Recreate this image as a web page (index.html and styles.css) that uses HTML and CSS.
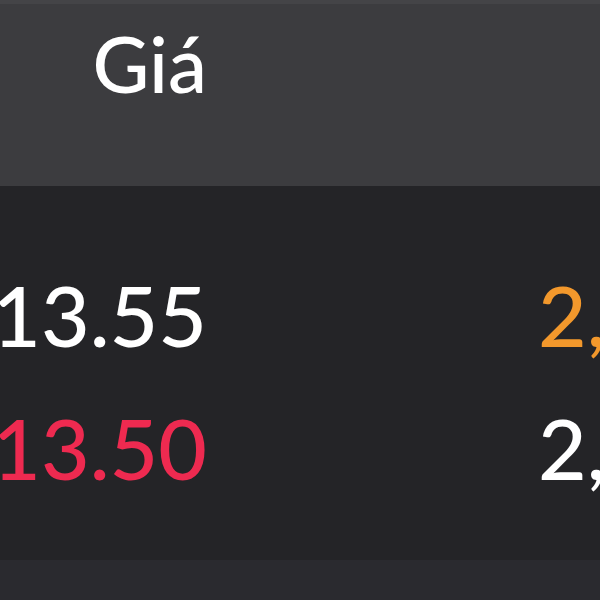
FILE: index.html
```html
<!DOCTYPE html>
<html>
<head>
<meta charset="utf-8">
<link rel="stylesheet" href="styles.css">
</head>
<body>
<div class="table">
  <div class="head">
    <div class="cell price">Giá</div>
    <div class="cell vol"></div>
  </div>
  <div class="body">
    <div class="row">
      <div class="cell price">13.55</div>
      <div class="cell vol orange">2,500</div>
    </div>
    <div class="row">
      <div class="cell price red">13.50</div>
      <div class="cell vol">2,300</div>
    </div>
  </div>
  <div class="foot"></div>
</div>
</body>
</html>
```
FILE: styles.css
```css
html, body {
  margin: 0;
  padding: 0;
  width: 600px;
  height: 600px;
  overflow: hidden;
  background: #242427;
}
.table {
  font-family: "Lato", "Open Sans", sans-serif;
  font-weight: 500;
  font-size: 84px;
  color: #ffffff;
  width: 600px;
  overflow: hidden;
}
.head {
  display: flex;
  height: 186px;
  background: #3c3c3f;
  border-top: 4px solid #444447;
  box-sizing: border-box;
}
.head .cell {
  font-size: 78px;
  line-height: 118px;
}
.body {
  padding-top: 62px;
  height: 374px;
  box-sizing: border-box;
  background: #242427;
}
.row {
  display: flex;
  height: 133px;
  line-height: 133px;
}
.cell {
  white-space: nowrap;
  flex: none;
}
.price {
  width: 207px;
  display: flex;
  justify-content: flex-end;
}
.vol {
  padding-left: 331px;
}
.orange { color: #f2982c; }
.red { color: #ee2a50; }
.foot {
  height: 40px;
  background: #2a2a2f;
}
```
